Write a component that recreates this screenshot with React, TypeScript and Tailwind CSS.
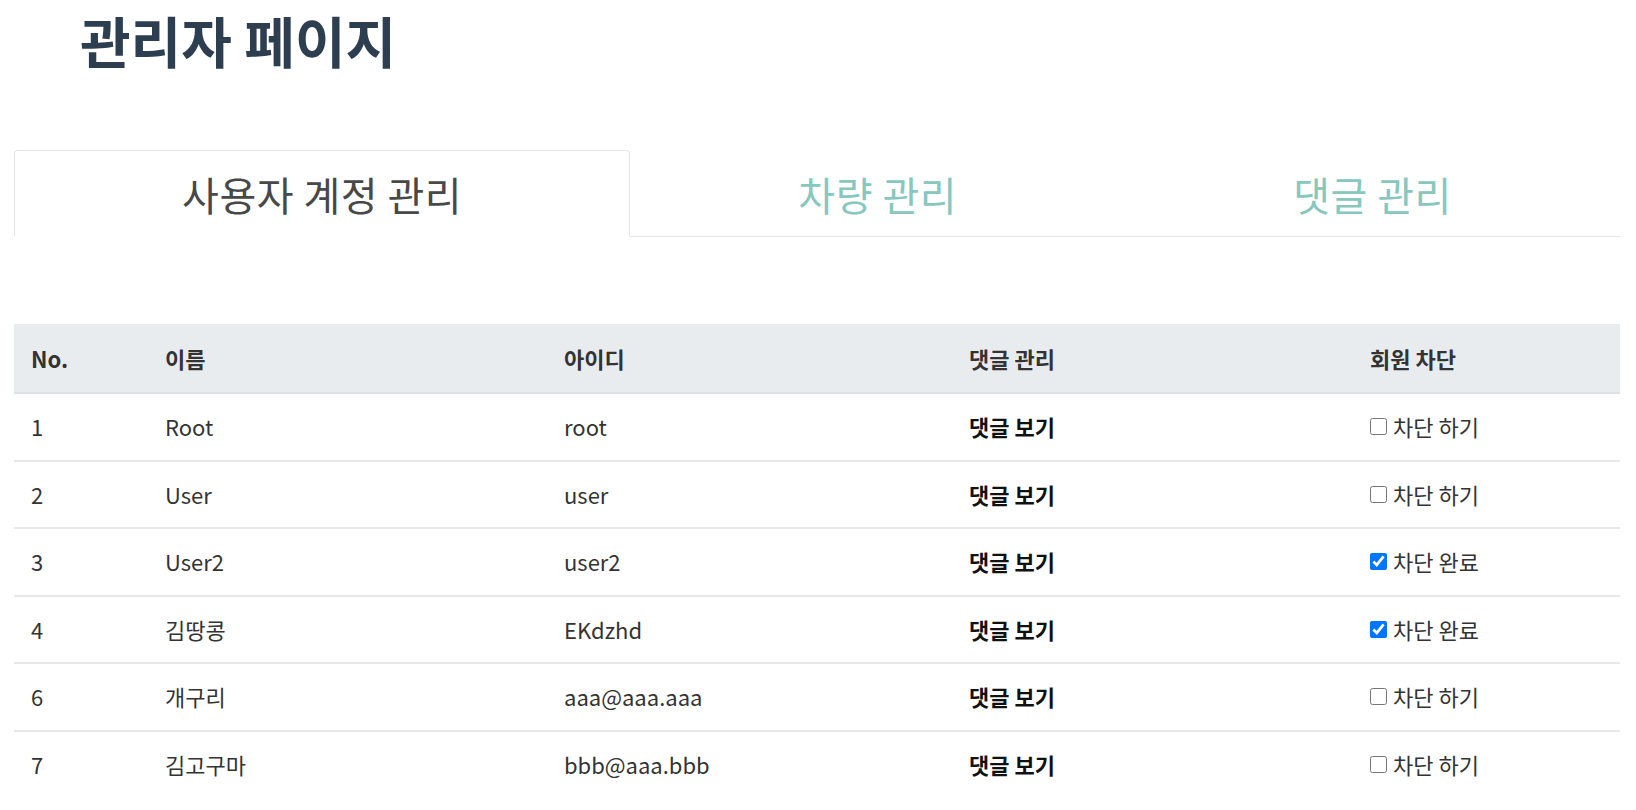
import { useState } from "react";

// One row of the user table
type Member = {
  no: number;
  name: string;
  userId: string;
  blocked: boolean;
};

const members: Member[] = [
  { no: 1, name: "Root", userId: "root", blocked: false },
  { no: 2, name: "User", userId: "user", blocked: false },
  { no: 3, name: "User2", userId: "user2", blocked: true },
  { no: 4, name: "김땅콩", userId: "EKdzhd", blocked: true },
  { no: 6, name: "개구리", userId: "aaa@aaa.aaa", blocked: false },
  { no: 7, name: "김고구마", userId: "bbb@aaa.bbb", blocked: false },
];

const tabs = ["사용자 계정 관리", "차량 관리", "댓글 관리"];

export default function App() {
  const [activeTab, setActiveTab] = useState(0);

  return (
    <main className="min-h-screen bg-white pl-[14px] pr-[16px] font-['Noto_Sans_CJK_KR','Noto_Sans',sans-serif]">
      {/* Page title */}
      <h1 className="ml-[66px] pt-[12px] text-[55px] font-bold leading-none text-[#2c3e50]">
        관리자 페이지
      </h1>

      {/* Tabs */}
      <ul className="mt-[83px] flex border-b border-[#e4e6e8]">
        {tabs.map((tab, i) => (
          <li key={tab} className="-mb-px flex-auto">
            <button
              onClick={() => setActiveTab(i)}
              className={`h-[87px] w-full rounded-t-[4px] border text-[40px] tracking-[0.5px] ${
                activeTab === i
                  ? "border-[#e4e6e8] border-b-white text-[#484848]"
                  : "border-transparent text-[#88c7be]"
              }`}
            >
              {tab}
            </button>
          </li>
        ))}
      </ul>

      {/* User table */}
      <table className="mt-[87px] w-full table-fixed border-collapse text-left text-[22px] text-[#333]">
        <colgroup>
          <col className="w-[134px]" />
          <col className="w-[399px]" />
          <col className="w-[405px]" />
          <col className="w-[401px]" />
          <col />
        </colgroup>
        <thead className="bg-[#e9ecef]">
          <tr className="h-[69px] border-b-2 border-[#dee2e6]">
            <th className="pl-[17px] font-bold">No.</th>
            <th className="pl-[17px] font-bold">이름</th>
            <th className="pl-[17px] font-bold">아이디</th>
            <th className="pl-[17px] font-bold">댓글 관리</th>
            <th className="pl-[17px] font-bold">회원 차단</th>
          </tr>
        </thead>
        <tbody>
          {members.map((m) => (
            <tr
              key={m.no}
              className="h-[67.5px] border-b-2 border-[#e6e8ea] last:border-b-0"
            >
              <td className="pl-[17px]">{m.no}</td>
              <td className="pl-[17px]">{m.name}</td>
              <td className="pl-[17px]">{m.userId}</td>
              <td className="pl-[17px] font-bold text-[#111]">댓글 보기</td>
              <td className="pl-[17px]">
                <label className="flex items-center gap-[6px]">
                  <input
                    type="checkbox"
                    checked={m.blocked}
                    readOnly
                    className="h-[17px] w-[17px] shrink-0"
                  />
                  {m.blocked ? "차단 완료" : "차단 하기"}
                </label>
              </td>
            </tr>
          ))}
        </tbody>
      </table>
    </main>
  );
}
